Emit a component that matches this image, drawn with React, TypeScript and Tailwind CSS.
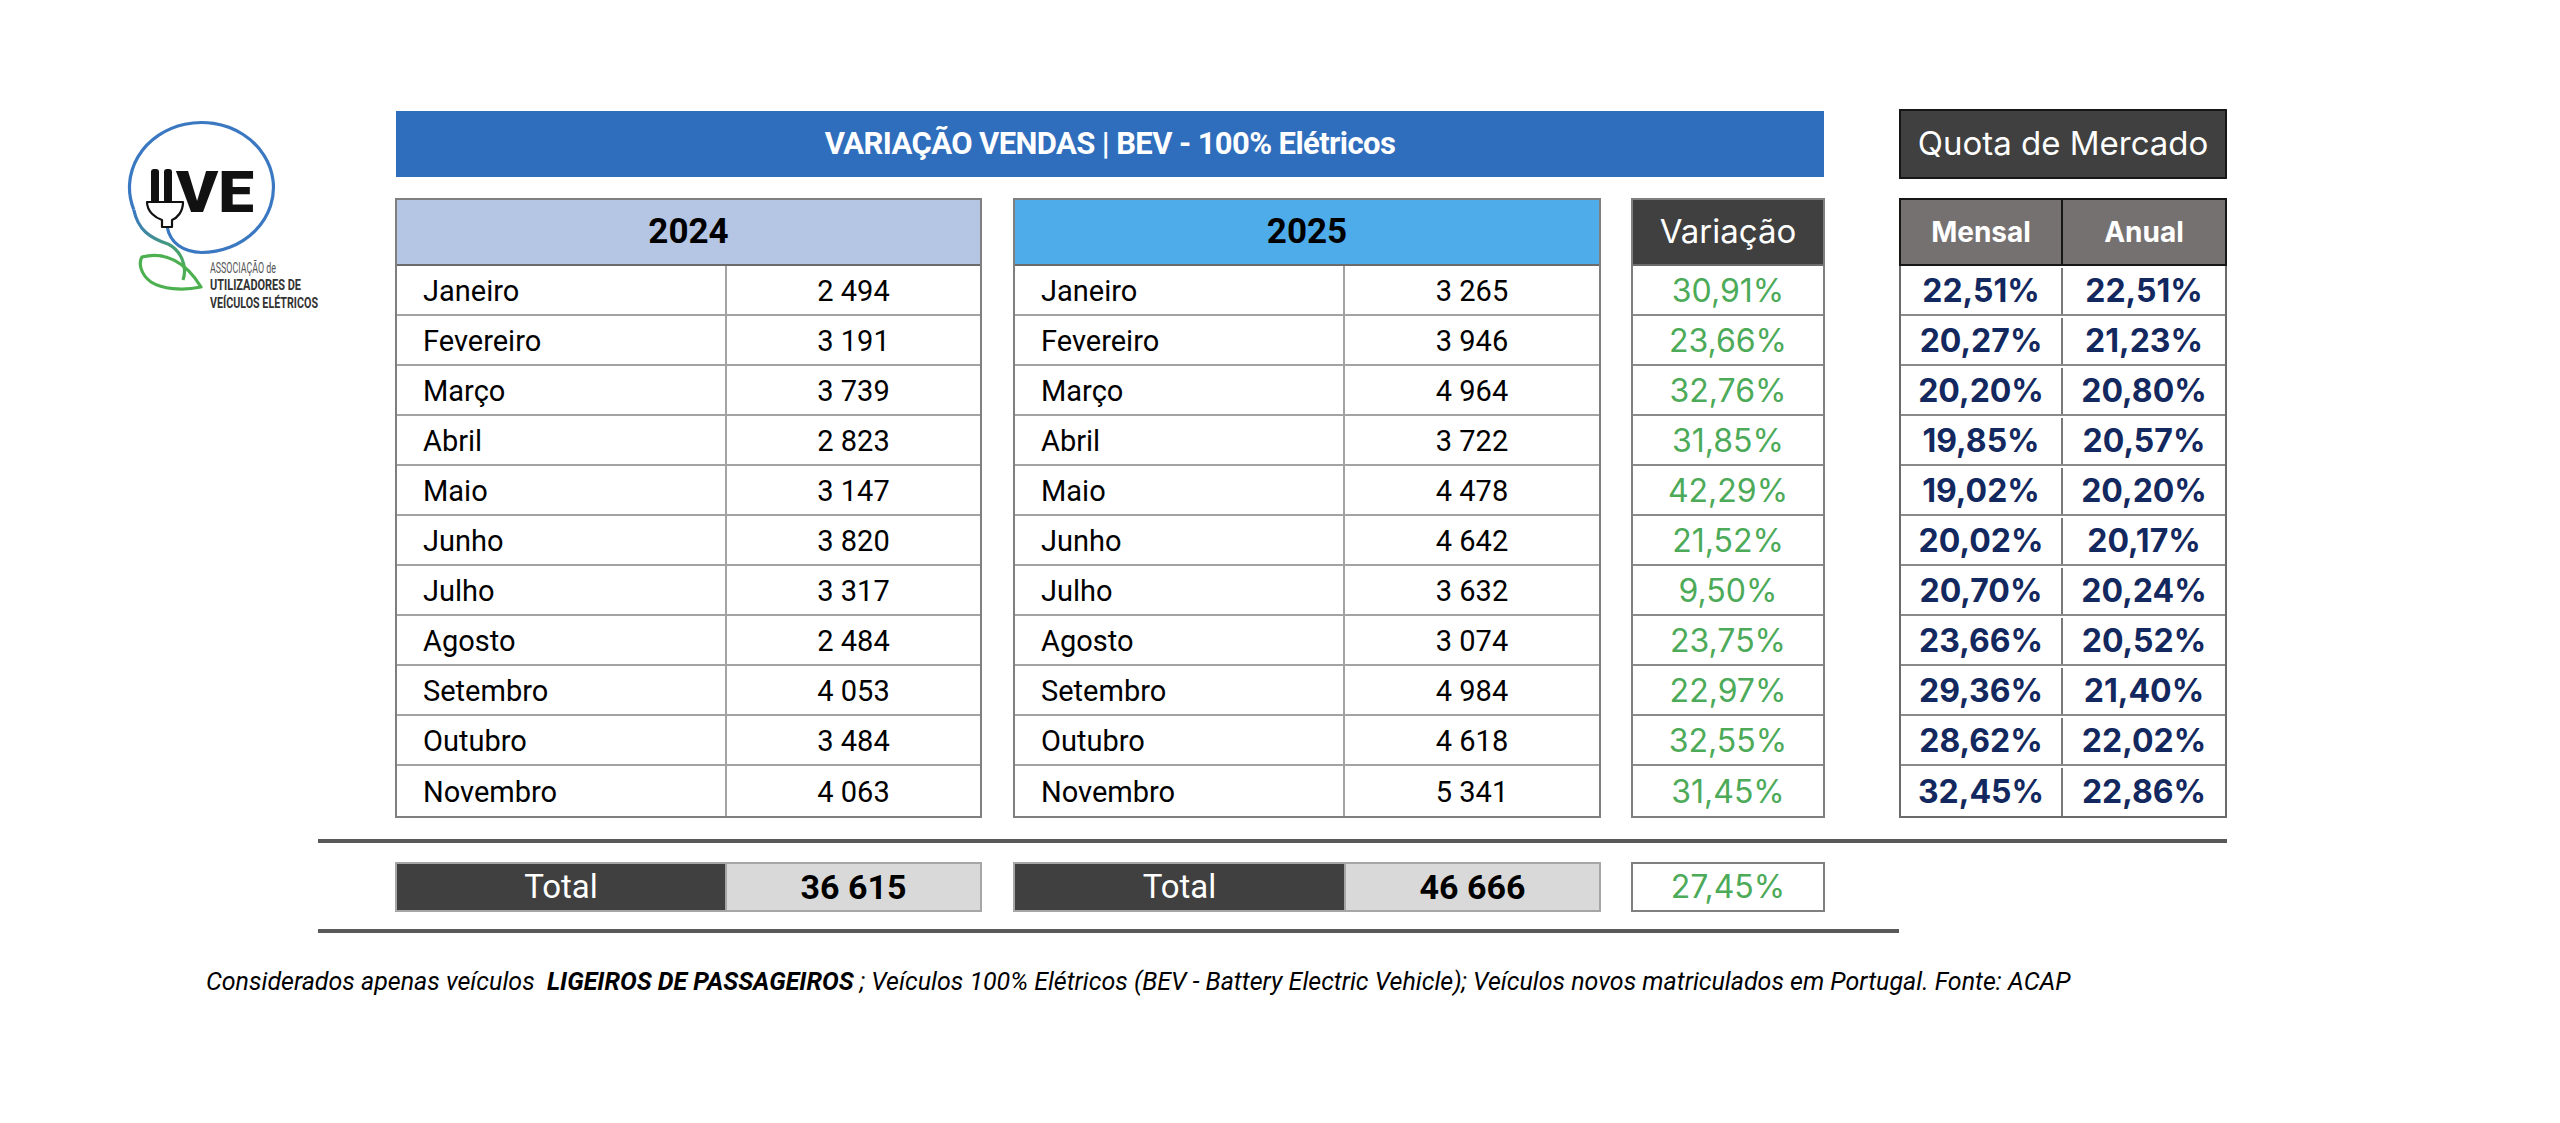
import React from "react";

const months = ["Janeiro","Fevereiro","Março","Abril","Maio","Junho","Julho","Agosto","Setembro","Outubro","Novembro"];
const v2024 = ["2 494","3 191","3 739","2 823","3 147","3 820","3 317","2 484","4 053","3 484","4 063"];
const v2025 = ["3 265","3 946","4 964","3 722","4 478","4 642","3 632","3 074","4 984","4 618","5 341"];
const variacao = ["30,91%","23,66%","32,76%","31,85%","42,29%","21,52%","9,50%","23,75%","22,97%","32,55%","31,45%"];
const mensal = ["22,51%","20,27%","20,20%","19,85%","19,02%","20,02%","20,70%","23,66%","29,36%","28,62%","32,45%"];
const anual = ["22,51%","21,23%","20,80%","20,57%","20,20%","20,17%","20,24%","20,52%","21,40%","22,02%","22,86%"];

function Logo() {
  return (
    <svg width="210" height="210" viewBox="0 0 210 210">
      <defs>
        <linearGradient id="stem" x1="0" y1="0" x2="1" y2="1">
          <stop offset="0" stopColor="#3a78c2" />
          <stop offset="1" stopColor="#4cb050" />
        </linearGradient>
      </defs>
      <path d="M 47 116 C 50 134, 64 142, 81.5 142.5 A 72 65 0 1 0 13.8 99.7" fill="none" stroke="#3a78c2" strokeWidth="3.2" />
      <path d="M 13.8 99.7 C 18 120, 30 128, 48 134 C 60 140, 68 155, 63 170" fill="none" stroke="url(#stem)" strokeWidth="3.2" />
      <path d="M 22 147 C 45 141, 66 152, 81 177 C 62 181, 42 179, 31 172 C 21 165, 18 153, 22 147 Z" fill="none" stroke="#4cb050" strokeWidth="3.2" strokeLinejoin="round" />
      <rect x="31" y="59" width="8" height="34" rx="3" fill="#111" />
      <rect x="44" y="59" width="8" height="34" rx="3" fill="#111" />
      <path d="M 27 92 L 63 92 C 63 102, 57 108, 52 110 L 52 117 L 42 117 L 42 110 C 36 108, 27 102, 27 92 Z" fill="#fff" stroke="#111" strokeWidth="2.2" strokeLinejoin="round" />
      <text x="56" y="102" fontFamily="Roboto, sans-serif" fontWeight="900" fontSize="58" textLength="78" lengthAdjust="spacingAndGlyphs" fill="#111">VE</text>
      <text x="90" y="163" fontFamily="Roboto, sans-serif" fontSize="15" textLength="66" lengthAdjust="spacingAndGlyphs" fill="#555">ASSOCIAÇÃO de</text>
      <text x="90" y="180" fontFamily="Roboto, sans-serif" fontWeight="700" fontSize="15" textLength="91" lengthAdjust="spacingAndGlyphs" fill="#333">UTILIZADORES DE</text>
      <text x="90" y="198" fontFamily="Roboto, sans-serif" fontWeight="700" fontSize="15" textLength="108" lengthAdjust="spacingAndGlyphs" fill="#333">VEÍCULOS ELÉTRICOS</text>
    </svg>
  );
}

function YearTable({ year, values, headerBg, width }: { year: string; values: string[]; headerBg: string; width: string }) {
  return (
    <div className={`${width} border-2 border-[#7f7f7f] font-['Roboto',sans-serif] text-black`}>
      <div className={`h-[66px] ${headerBg} border-b-2 border-[#6b6b6b] flex items-center justify-center text-[35px] font-bold`}>
        {year}
      </div>
      <div className="flex flex-col divide-y-2 divide-[#a3a3a3]">
        {months.map((m, i) => (
          <div key={m} className="h-[50px] flex items-stretch">
            <div className="w-[330px] shrink-0 border-r-2 border-[#a3a3a3] flex items-center pl-[26px] pt-[3px] text-[29px]">{m}</div>
            <div className="flex-1 flex items-center justify-center pt-[3px] text-[29px]">{values[i]}</div>
          </div>
        ))}
      </div>
    </div>
  );
}

export default function App() {
  return (
    <div className="w-[2560px] h-[1123px] bg-white overflow-hidden">
      <div className="flex pt-[109px]">
        <div className="w-[395px] shrink-0 pl-[120px] pt-[1px]">
          <Logo />
        </div>
        <div className="flex flex-col">
          <div className="flex items-start">
            <div className="ml-[1px] mt-[2px] w-[1428px] h-[66px] bg-[#2f6ebd] flex items-center justify-center text-white font-['Roboto',sans-serif] font-bold text-[31px] tracking-[-0.6px]">
              VARIAÇÃO VENDAS | BEV - 100% Elétricos
            </div>
            <div className="ml-[75px] w-[328px] h-[70px] bg-[#404040] border-2 border-[#161616] flex items-center justify-center text-white font-['Inter',sans-serif] text-[33px]">
              Quota de Mercado
            </div>
          </div>
          <div className="flex items-start mt-[19px]">
            <YearTable year="2024" values={v2024} headerBg="bg-[#b4c6e4]" width="w-[587px]" />
            <div className="ml-[31px]">
              <YearTable year="2025" values={v2025} headerBg="bg-[#4eaceb]" width="w-[588px]" />
            </div>
            <div className="ml-[30px] w-[194px] border-2 border-[#7f7f7f] font-['Inter',sans-serif]">
              <div className="h-[66px] bg-[#404040] border-b-2 border-[#6b6b6b] flex items-center justify-center text-white text-[33px]">
                Variação
              </div>
              <div className="flex flex-col divide-y-2 divide-[#8a8a8a]">
                {variacao.map((v, i) => (
                  <div key={i} className="h-[50px] flex items-center justify-center pt-[2px] text-[32px] text-[#4caa58]">{v}</div>
                ))}
              </div>
            </div>
            <div className="ml-[74px] w-[328px] font-['Inter',sans-serif]">
              <div className="h-[68px] bg-[#767171] border-2 border-[#161616] flex text-white font-bold text-[28px]">
                <div className="w-[162px] border-r-2 border-[#161616] flex items-center justify-center">Mensal</div>
                <div className="flex-1 flex items-center justify-center">Anual</div>
              </div>
              <div className="border-x-2 border-b-2 border-[#6b6b6b] flex flex-col divide-y-2 divide-[#8a8a8a]">
                {mensal.map((m, i) => (
                  <div key={i} className="h-[50px] flex pt-[2px] text-[32px] font-bold text-[#13285e]">
                    <div className="w-[162px] border-r-2 border-[#7a7a7a] flex items-center justify-center">{m}</div>
                    <div className="flex-1 flex items-center justify-center">{anual[i]}</div>
                  </div>
                ))}
              </div>
            </div>
          </div>
        </div>
      </div>

      <div className="ml-[318px] mt-[21px] w-[1909px] h-[4px] bg-[#595959]" />

      <div className="flex items-start ml-[395px] mt-[19px] h-[50px]">
        <div className="w-[587px] h-[50px] flex border-2 border-[#a6a6a6] font-['Roboto',sans-serif]">
          <div className="w-[328px] bg-[#404040] flex items-center justify-center text-white text-[33px]">Total</div>
          <div className="flex-1 bg-[#d9d9d9] border-l-2 border-[#a6a6a6] flex items-center justify-center text-black font-bold text-[34px]">36 615</div>
        </div>
        <div className="ml-[31px] w-[588px] h-[50px] flex border-2 border-[#a6a6a6] font-['Roboto',sans-serif]">
          <div className="w-[329px] bg-[#404040] flex items-center justify-center text-white text-[33px]">Total</div>
          <div className="flex-1 bg-[#d9d9d9] border-l-2 border-[#a6a6a6] flex items-center justify-center text-black font-bold text-[34px]">46 666</div>
        </div>
        <div className="ml-[30px] w-[194px] h-[50px] border-2 border-[#7f7f7f] flex items-center justify-center font-['Inter',sans-serif] text-[32px] text-[#4caa58]">
          27,45%
        </div>
      </div>

      <div className="ml-[318px] mt-[17px] w-[1581px] h-[4px] bg-[#595959]" />

      <div className="ml-[206px] mt-[34px] font-['Roboto',sans-serif] italic text-[25px] text-black whitespace-pre leading-[30px]">
        {"Considerados apenas veículos  "}
        <span className="font-bold">LIGEIROS DE PASSAGEIROS</span>
        {" ; Veículos 100% Elétricos (BEV - Battery Electric Vehicle); Veículos novos matriculados em Portugal. Fonte: ACAP"}
      </div>
    </div>
  );
}
